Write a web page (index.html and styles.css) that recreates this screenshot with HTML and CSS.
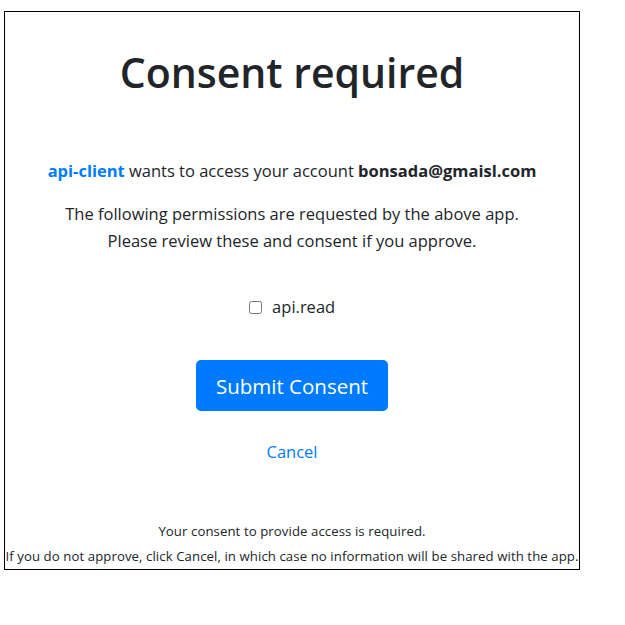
FILE: index.html
```html
<!DOCTYPE html>
<html lang="en">
<head>
<meta charset="utf-8">
<title>Consent required</title>
<link rel="stylesheet" href="styles.css">
</head>
<body>
<div class="page">
  <h1 class="title">Consent required</h1>
  <p class="client"><span class="client-name">api-client</span> wants to access your account <strong>bonsada@gmaisl.com</strong></p>
  <p class="desc">The following permissions are requested by the above app.<br>Please review these and consent if you approve.</p>
  <div class="scope">
    <label class="scope-label"><input type="checkbox" class="scope-check"> api.read</label>
  </div>
  <div class="actions">
    <button class="btn-submit" type="button">Submit Consent</button>
  </div>
  <div class="cancel-row"><a href="#" class="cancel">Cancel</a></div>
  <div class="footer">
    <p class="note">Your consent to provide access is required.</p>
    <p class="note note-last">If you do not approve, click Cancel, in which case no information will be shared with the app.</p>
  </div>
</div>
</body>
</html>
```

FILE: styles.css
```css
html, body {
  margin: 0;
  padding: 0;
  background: #fff;
}
body {
  font-family: "Open Sans", "Noto Sans", sans-serif;
  color: #212529;
}
.page {
  margin: 11px 0 0 4px;
  width: 574px;
  border: 1px solid #000;
  text-align: center;
}
.title {
  margin: 30px 0 0;
  font-size: 41px;
  font-weight: 600;
  line-height: 60px;
}
.client {
  margin: 55px 0 0;
  font-size: 16.5px;
  line-height: 27px;
}
.client-name {
  color: #007bff;
  font-weight: 700;
}
.client strong {
  font-weight: 700;
}
.desc {
  margin: 16px 0 0;
  font-size: 16.5px;
  line-height: 27px;
}
.scope {
  margin-top: 39px;
  font-size: 16.5px;
  line-height: 27px;
}
.scope-check {
  margin: 0 6px 0 0;
  width: 13px;
  height: 13px;
  vertical-align: -1px;
}
.actions {
  margin-top: 40px;
  display: flex;
  justify-content: center;
}
.btn-submit {
  width: 192px;
  height: 51px;
  background: #007bff;
  color: #fff;
  border: 0;
  border-radius: 5px;
  font-family: inherit;
  font-size: 20.5px;
  padding: 0;
}
.cancel-row {
  margin-top: 27px;
  font-size: 16.5px;
  line-height: 27px;
}
.cancel {
  color: #007bff;
  text-decoration: none;
}
.footer {
  margin-top: 53px;
}
.note {
  margin: 0;
  font-size: 13.2px;
  letter-spacing: 0.08px;
  line-height: 26px;
  white-space: nowrap;
}
.note-last {
  line-height: 25px;
}
```
